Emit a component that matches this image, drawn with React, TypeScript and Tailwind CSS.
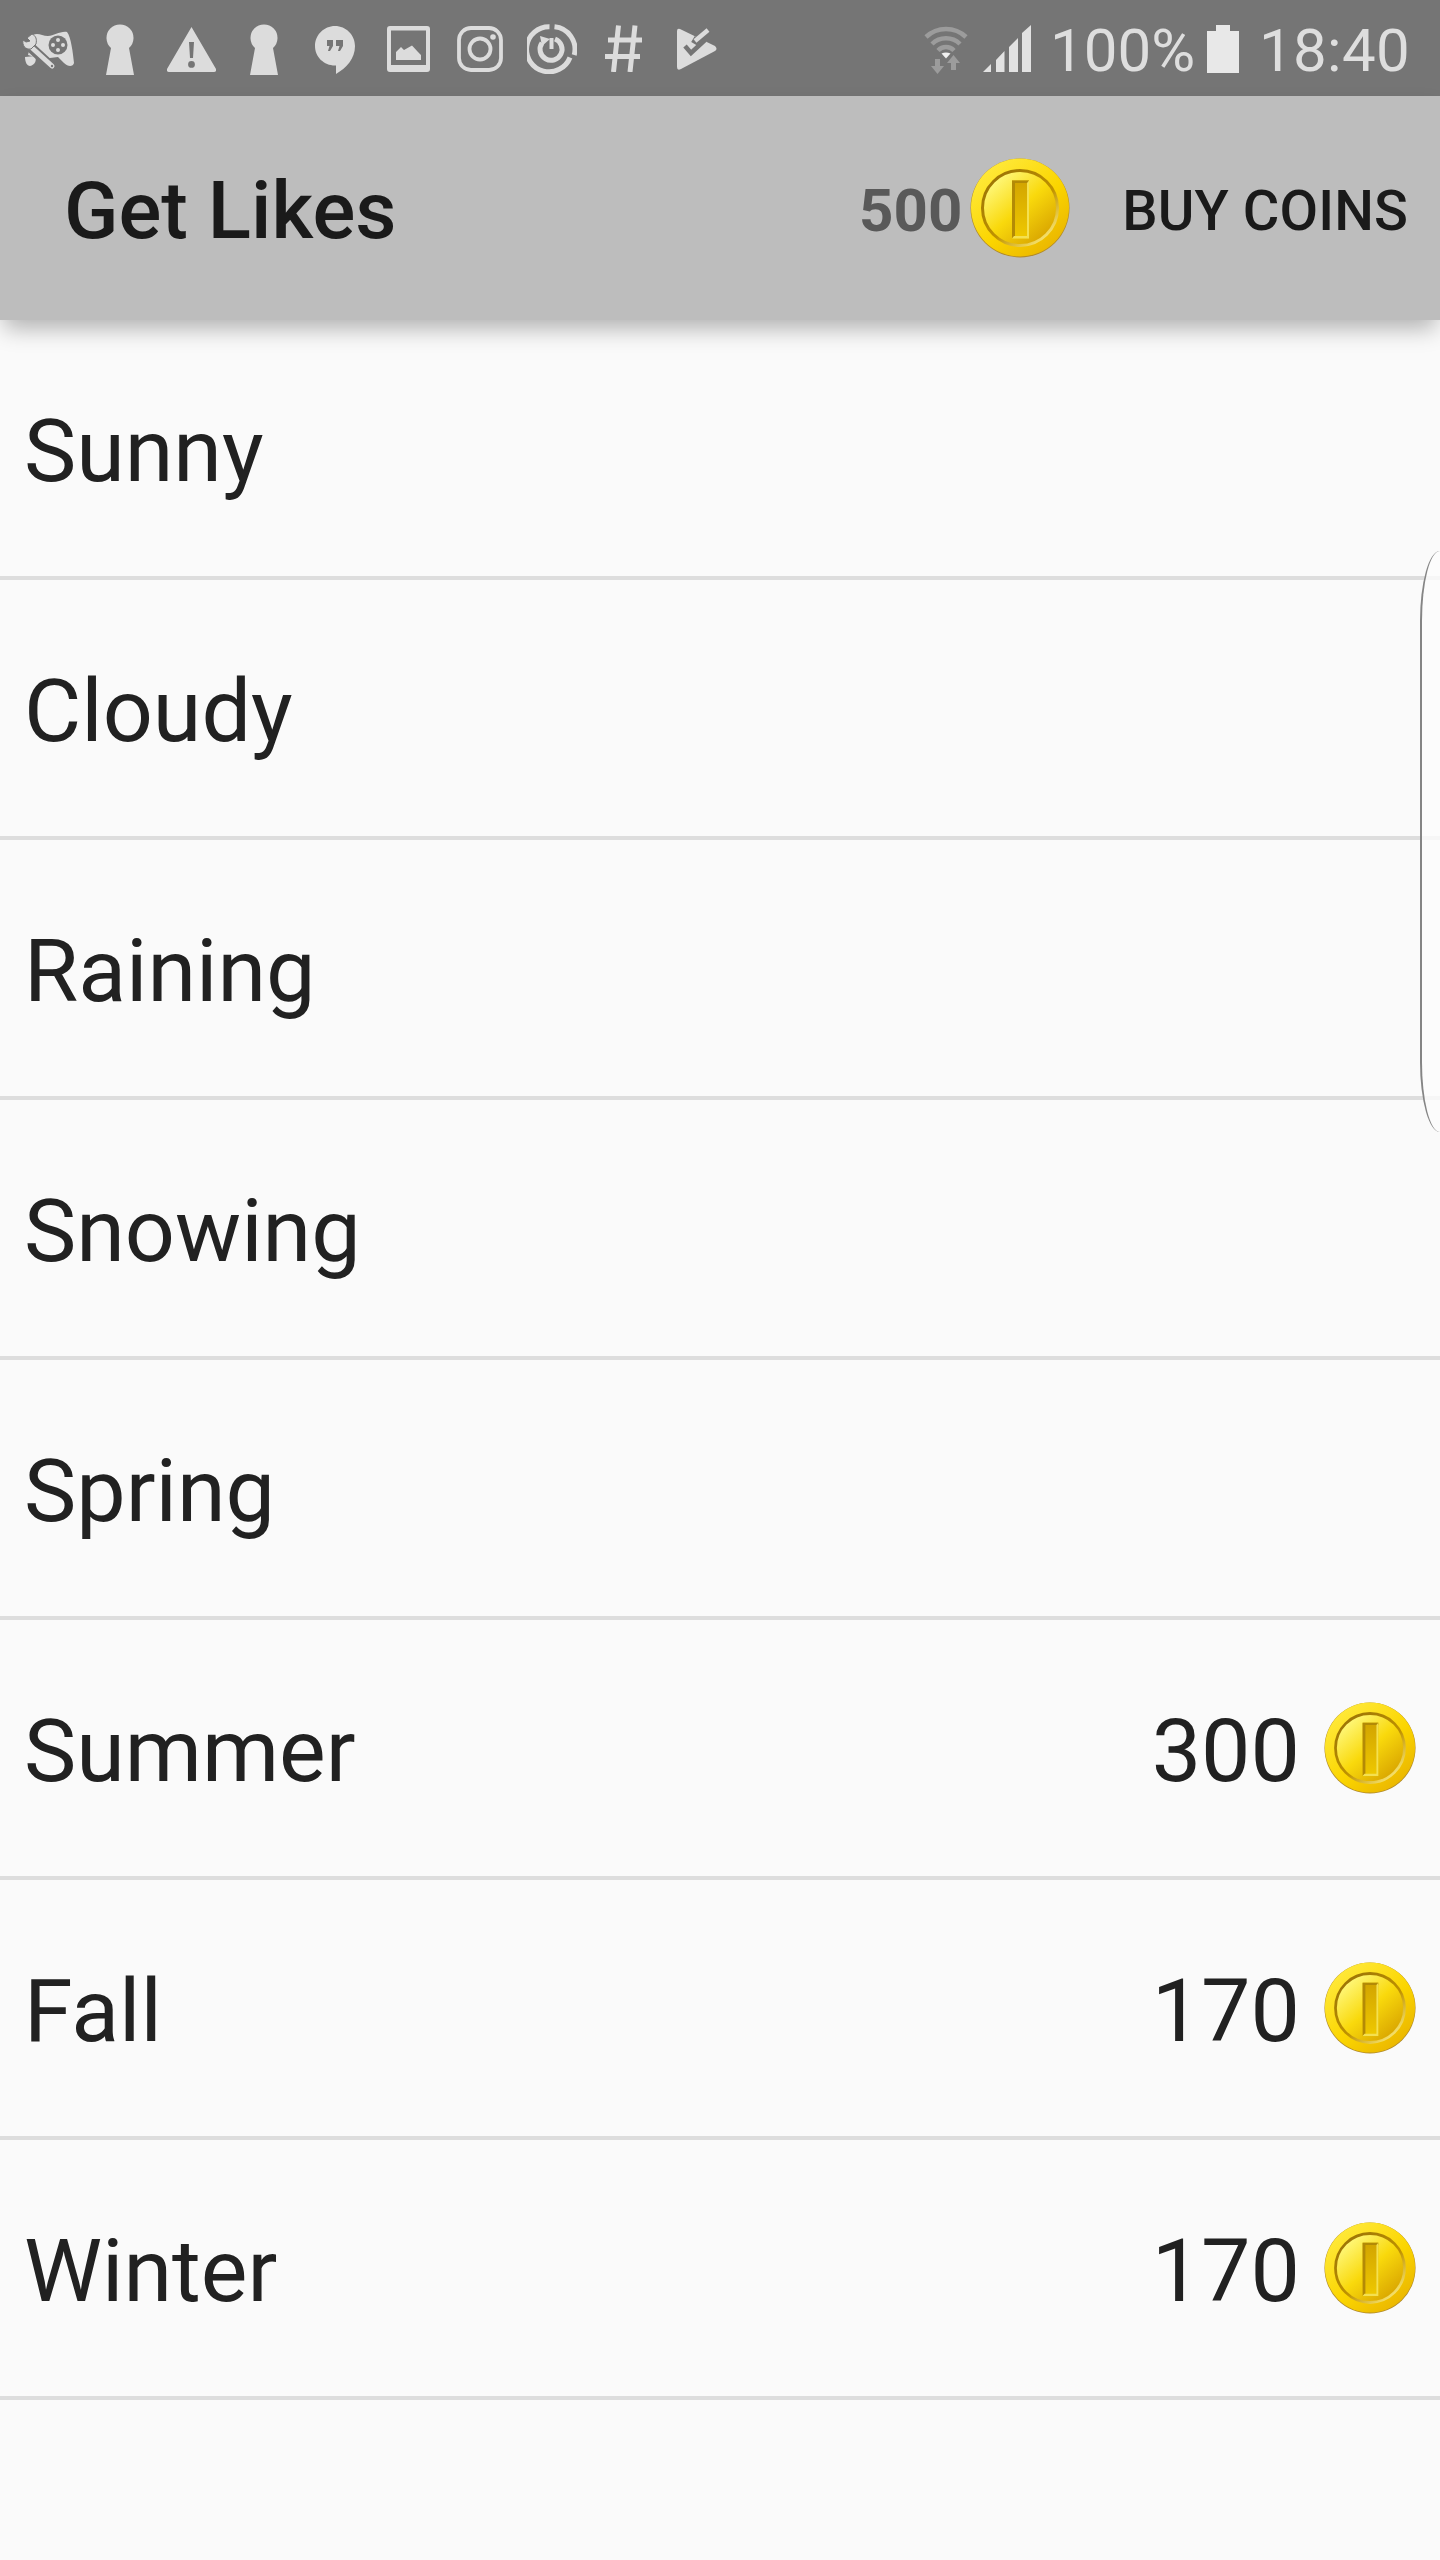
import React from 'react';

interface RowData {
  name: string;
  price?: number;
}

const rows: RowData[] = [
  { name: 'Sunny' },
  { name: 'Cloudy' },
  { name: 'Raining' },
  { name: 'Snowing' },
  { name: 'Spring' },
  { name: 'Summer', price: 300 },
  { name: 'Fall', price: 170 },
  { name: 'Winter', price: 170 },
];

const ICON = '#dcdcdc';
const BAR = '#757575';
const DIM = '#9c9c9c';

const Coin: React.FC<{ id: string; className: string }> = ({ id, className }) => (
  <svg viewBox="0 0 100 100" className={className}>
    <defs>
      <linearGradient id={`rim-${id}`} x1="0.15" y1="0.1" x2="0.85" y2="0.95">
        <stop offset="0" stopColor="#ffe93a" />
        <stop offset="0.55" stopColor="#fbd500" />
        <stop offset="1" stopColor="#e9b400" />
      </linearGradient>
      <linearGradient id={`face-${id}`} x1="0.15" y1="0.1" x2="0.85" y2="0.9">
        <stop offset="0" stopColor="#fff97f" />
        <stop offset="0.5" stopColor="#f9d90c" />
        <stop offset="1" stopColor="#d8a400" />
      </linearGradient>
      <linearGradient id={`ring-${id}`} x1="0.1" y1="0.05" x2="0.85" y2="0.95">
        <stop offset="0" stopColor="#9a7206" />
        <stop offset="0.6" stopColor="#c09300" />
        <stop offset="1" stopColor="#fbe978" />
      </linearGradient>
      <linearGradient id={`bar-${id}`} x1="0" y1="0" x2="0" y2="1">
        <stop offset="0" stopColor="#d2a400" />
        <stop offset="1" stopColor="#efc900" />
      </linearGradient>
    </defs>
    <circle cx="50" cy="50" r="49.5" fill="#b08a2a" />
    <circle cx="50" cy="49.5" r="49" fill={`url(#rim-${id})`} />
    <circle cx="50" cy="50" r="37.5" fill={`url(#face-${id})`} stroke={`url(#ring-${id})`} strokeWidth="3" />
    <rect x="42" y="22.5" width="17" height="58" fill={`url(#bar-${id})`} />
    <path d="M42 22.5H59V25H45V78L42 80.5Z" fill="#b38a06" />
    <path d="M42 80.5H59V22.5L57 25V78H44Z" fill="#f4e050" />
  </svg>
);

const Keyhole: React.FC<{ className: string }> = ({ className }) => (
  <svg viewBox="0 0 28 52" className={className}>
    <path d="M5 25A13.5 13.5 0 1 1 23 25L28 52H0Z" fill={ICON} />
  </svg>
);

const ToolsIcon = () => (
  <svg viewBox="0 0 52 40" className="mt-[31px] h-[40px] w-[52px]">
    <path d="M11 4C16 1 20 5 26 5C32 5 38 0 45 1C49 6 51 22 52 32C51 36 46 36 42 32L36 26L20 28L6 24Z" fill={ICON} />
    <path d="M3 26L13 25C15 29 13 34 8 35C5 35 3 31 3 26Z" fill={ICON} />
    <circle cx="36" cy="14" r="9.5" fill={BAR} />
    <g fill={ICON}>
      <circle cx="36" cy="9" r="2" />
      <circle cx="36" cy="19" r="2" />
      <circle cx="31" cy="14" r="2" />
      <circle cx="41" cy="14" r="2" />
    </g>
    <path d="M6 14L30 36" stroke={BAR} strokeWidth="10" strokeLinecap="round" />
    <path d="M8 15L30 35" stroke={ICON} strokeWidth="5" strokeLinecap="round" />
    <path d="M10 3L5 7L8 10L4 11L1 9C0 14 3 19 9 18L14 13C15 8 14 5 10 3Z" fill={ICON} stroke={BAR} strokeWidth="1" />
    <circle cx="30" cy="35" r="1.2" fill={BAR} />
  </svg>
);

const WarningIcon = () => (
  <svg viewBox="0 0 49 45" className="mt-[27px] h-[45px] w-[49px]">
    <path
      fillRule="evenodd"
      d="M24.5 0L49 42Q49.5 45 47 45H2Q-.5 45 0 42ZM22 15L23 31H26L27 15ZM24.5 34A3.4 3.4 0 1 0 24.5 40.8A3.4 3.4 0 1 0 24.5 34Z"
      fill={ICON}
    />
  </svg>
);

const HangoutsIcon = () => (
  <svg viewBox="0 0 40 48" className="mt-[26px] h-[48px] w-[40px]">
    <path d="M20 0C31 0 40 9 40 20C40 33 31 42 21 48V39.5H20C9 39.5 0 31 0 20C0 9 9 0 20 0Z" fill={ICON} />
    <path d="M12 14H18V20L15 25H13L14.5 20H12ZM21 14H28V20L25 25H23L24.5 20H21Z" fill={BAR} />
  </svg>
);

const ImageIcon = () => (
  <svg viewBox="0 0 43 46" className="mt-[26px] h-[46px] w-[43px]">
    <path
      fillRule="evenodd"
      d="M3 0H40Q43 0 43 3V43Q43 46 40 46H3Q0 46 0 43V3Q0 0 3 0ZM4 4.5V39H39V4.5Z"
      fill={ICON}
    />
    <path d="M9 34V26L14 21L17 24L25 19.5L31 26L34 29V34Z" fill={ICON} />
  </svg>
);

const InstagramIcon = () => (
  <svg viewBox="0 0 46 46" className="mt-[26px] h-[46px] w-[46px]">
    <rect x="2" y="2" width="42" height="42" rx="12" fill="none" stroke={ICON} strokeWidth="3.8" />
    <circle cx="23" cy="23" r="10.5" fill="none" stroke={ICON} strokeWidth="3.8" />
    <circle cx="36" cy="11" r="2.8" fill={ICON} />
  </svg>
);

const PowerIcon = () => (
  <svg viewBox="0 0 50 50" className="mt-[24px] h-[50px] w-[50px]">
    <path d="M27.5 2.8A22.5 22.5 0 0 1 47.2 31" fill="none" stroke={ICON} strokeWidth="5" />
    <path d="M43 33.5A22.5 22.5 0 1 1 22.5 2.8" fill="none" stroke={ICON} strokeWidth="5" />
    <path d="M28 15A11 11 0 1 1 15 19" fill="none" stroke={ICON} strokeWidth="5" />
    <path d="M13 12L23 15L15 22Z" fill={ICON} />
    <path d="M24.5 14V25" stroke={ICON} strokeWidth="4" />
  </svg>
);

const HashIcon = () => (
  <svg viewBox="0 0 37 47" className="mt-[25px] h-[47px] w-[37px]">
    <path d="M13.5 0.5L8.5 47M30 0.5L25 47M3 15H37M0 31.5H35" fill="none" stroke={ICON} strokeWidth="5" />
  </svg>
);

const TasksIcon = () => (
  <svg viewBox="0 0 40 42" className="mt-[28px] h-[42px] w-[40px]">
    <path d="M0 3Q0 0 3 1L38 18Q41 21 38 23L4 41Q0 43 0 39Z" fill={ICON} />
    <path d="M16 11L21 14L31 2" fill="none" stroke={BAR} strokeWidth="7" />
    <path d="M18 13L31 2" fill="none" stroke={ICON} strokeWidth="4.5" />
    <path d="M8 18L14 25L28 12" fill="none" stroke={BAR} strokeWidth="4.5" />
  </svg>
);

const WifiIcon = () => (
  <svg viewBox="0 0 44 50" className="mt-[24px] h-[50px] w-[44px]">
    <g fill="none" stroke={DIM} strokeWidth="4.5">
      <path d="M2 13A29 29 0 0 1 42 13" />
      <path d="M8 20A20 20 0 0 1 36 20" />
      <path d="M14 26.5A11 11 0 0 1 30 26.5" />
    </g>
    <path d="M17.5 29.5Q22 27.5 26.5 29.5L22 34.5Z" fill="#f0f0f0" />
    <path d="M11 35H16V42H20L13.5 50L7 42H11Z" fill={DIM} />
    <path d="M27 39V46H32V39H36L29.5 31L23 39Z" fill={DIM} />
  </svg>
);

const SignalIcon = () => (
  <svg viewBox="0 0 48 47" className="mt-[25px] h-[47px] w-[48px]">
    <path d="M0 47L8 39V47ZM13 35L21.5 26V47H13ZM26 22L35 13V47H26ZM39 8L48 0V47H39Z" fill="#e2e2e2" />
  </svg>
);

const App: React.FC = () => {
  return (
    <div className="relative min-h-[2560px] w-[1440px] overflow-hidden bg-[#fafafa] [font-family:Roboto,sans-serif]">
      {/* status bar */}
      <div className="flex h-24 items-start justify-between bg-[#757575] pl-[22px] pr-[30px]">
        <div className="flex items-start">
          <ToolsIcon />
          <Keyhole className="ml-[32px] mt-[23px] h-[52px] w-[28px]" />
          <div className="ml-[33px]">
            <WarningIcon />
          </div>
          <Keyhole className="ml-[34px] mt-[23px] h-[52px] w-[28px]" />
          <div className="ml-[37px]">
            <HangoutsIcon />
          </div>
          <div className="ml-[32px]">
            <ImageIcon />
          </div>
          <div className="ml-[27px]">
            <InstagramIcon />
          </div>
          <div className="ml-[24px]">
            <PowerIcon />
          </div>
          <div className="ml-[28px]">
            <HashIcon />
          </div>
          <div className="ml-[35px]">
            <TasksIcon />
          </div>
        </div>
        <div className="flex items-start">
          <WifiIcon />
          <div className="ml-[15px]">
            <SignalIcon />
          </div>
          <span className="ml-[19px] mt-[16px] text-[60px] leading-[70px] text-[#dedede]">100%</span>
          <div className="ml-[12px] mt-[25px] flex w-[32px] flex-col items-center">
            <div className="h-[6px] w-[14px] bg-[#e8e8e8]" />
            <div className="h-[42px] w-[32px] bg-[#e8e8e8]" />
          </div>
          <span className="ml-[20px] mt-[16px] text-[60px] leading-[70px] tracking-[0.3px] text-[#dedede]">18:40</span>
        </div>
      </div>

      {/* action bar */}
      <div className="relative z-10 flex h-[224px] items-center bg-[#bdbdbd] pl-[64px] pr-[32px] shadow-[0_12px_22px_-4px_rgba(0,0,0,0.3)]">
        <h1 className="mt-[6px] flex-1 text-[80px] font-medium leading-none text-[#1a1a1a]">Get Likes</h1>
        <span className="mt-[6px] text-[60px] font-bold leading-none text-[#595959]">500</span>
        <Coin id="header" className="ml-[8px] h-[100px] w-[100px]" />
        <span className="ml-[52px] mt-[6px] text-[56px] font-medium leading-none tracking-[0.1px] text-[#1a1a1a]">
          BUY COINS
        </span>
      </div>

      {/* list */}
      <div>
        {rows.map((row) => (
          <div
            key={row.name}
            className="flex h-[260px] items-center justify-between border-b-4 border-[#dddddd] pl-6 pr-6"
          >
            <span className="mt-[6px] text-[88px] leading-none text-[#212121]">{row.name}</span>
            {row.price !== undefined && (
              <div className="flex items-center">
                <span className="mt-[6px] text-[88px] leading-none text-[#212121]">{row.price}</span>
                <Coin id={row.name} className="ml-[24px] h-[92px] w-[92px]" />
              </div>
            )}
          </div>
        ))}
      </div>

      {/* edge panel handle */}
      <div className="absolute right-0 top-[551px] h-[581px] w-[20px] rounded-bl-[20px_70px] rounded-tl-[20px_70px] border-y-0 border-l-[2px] border-r-0 border-solid border-[#858585] bg-[#fdfdfd]/80" />
    </div>
  );
};

export default App;
